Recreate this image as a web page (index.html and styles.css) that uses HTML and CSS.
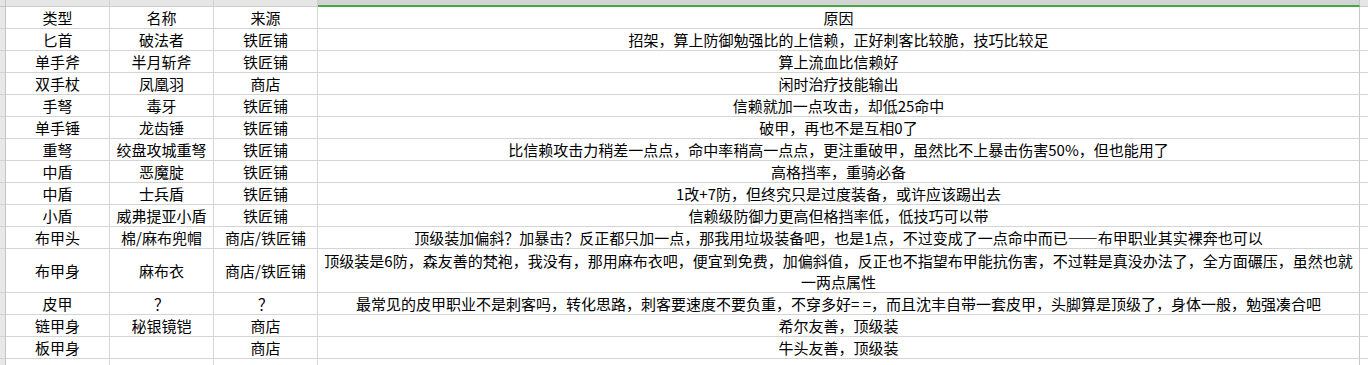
FILE: index.html
```html
<!DOCTYPE html>
<html lang="zh-CN">
<head>
<meta charset="utf-8">
<title>装备</title>
<link rel="stylesheet" href="styles.css">
</head>
<body>
<div class="sheet">
  <div class="corner"></div><div class="ch"></div><div class="ch"></div><div class="ch"></div><div class="ch sel"></div><div class="ch last"></div>

  <div class="rh"></div><div class="c">类型</div><div class="c">名称</div><div class="c">来源</div><div class="c d">原因</div><div class="c e"></div>
  <div class="rh"></div><div class="c">匕首</div><div class="c">破法者</div><div class="c">铁匠铺</div><div class="c d">招架，算上防御勉强比的上信赖，正好刺客比较脆，技巧比较足</div><div class="c e"></div>
  <div class="rh"></div><div class="c">单手斧</div><div class="c">半月斩斧</div><div class="c">铁匠铺</div><div class="c d">算上流血比信赖好</div><div class="c e"></div>
  <div class="rh"></div><div class="c">双手杖</div><div class="c">凤凰羽</div><div class="c">商店</div><div class="c d">闲时治疗技能输出</div><div class="c e"></div>
  <div class="rh"></div><div class="c">手弩</div><div class="c">毒牙</div><div class="c">铁匠铺</div><div class="c d">信赖就加一点攻击，却低25命中</div><div class="c e"></div>
  <div class="rh"></div><div class="c">单手锤</div><div class="c">龙齿锤</div><div class="c">铁匠铺</div><div class="c d">破甲，再也不是互相0了</div><div class="c e"></div>
  <div class="rh"></div><div class="c">重弩</div><div class="c">绞盘攻城重弩</div><div class="c">铁匠铺</div><div class="c d">比信赖攻击力稍差一点点，命中率稍高一点点，更注重破甲，虽然比不上暴击伤害50%，但也能用了</div><div class="c e"></div>
  <div class="rh"></div><div class="c">中盾</div><div class="c">恶魔腚</div><div class="c">铁匠铺</div><div class="c d">高格挡率，重骑必备</div><div class="c e"></div>
  <div class="rh"></div><div class="c">中盾</div><div class="c">士兵盾</div><div class="c">铁匠铺</div><div class="c d">1改+7防，但终究只是过度装备，或许应该踢出去</div><div class="c e"></div>
  <div class="rh"></div><div class="c">小盾</div><div class="c">威弗提亚小盾</div><div class="c">铁匠铺</div><div class="c d">信赖级防御力更高但格挡率低，低技巧可以带</div><div class="c e"></div>
  <div class="rh"></div><div class="c">布甲头</div><div class="c">棉/麻布兜帽</div><div class="c">商店/铁匠铺</div><div class="c d">顶级装加偏斜？加暴击？反正都只加一点，那我用垃圾装备吧，也是1点，不过变成了一点命中而已——布甲职业其实裸奔也可以</div><div class="c e"></div>
  <div class="rh"></div><div class="c">布甲身</div><div class="c">麻布衣</div><div class="c">商店/铁匠铺</div><div class="c d">顶级装是6防，森友善的梵袍，我没有，那用麻布衣吧，便宜到免费，加偏斜值，反正也不指望布甲能抗伤害，不过鞋是真没办法了，全方面碾压，虽然也就一两点属性</div><div class="c e"></div>
  <div class="rh"></div><div class="c">皮甲</div><div class="c">？</div><div class="c">？</div><div class="c d">最常见的皮甲职业不是刺客吗，转化思路，刺客要速度不要负重，不穿多好= =，而且沈丰自带一套皮甲，头脚算是顶级了，身体一般，勉强凑合吧</div><div class="c e"></div>
  <div class="rh"></div><div class="c">链甲身</div><div class="c">秘银镜铠</div><div class="c">商店</div><div class="c d">希尔友善，顶级装</div><div class="c e"></div>
  <div class="rh"></div><div class="c">板甲身</div><div class="c"></div><div class="c">商店</div><div class="c d">牛头友善，顶级装</div><div class="c e"></div>
  <div class="rh"></div><div class="c"></div><div class="c"></div><div class="c"></div><div class="c d"></div><div class="c e"></div>
</div>
</body>
</html>
```
FILE: styles.css
```css
html, body {
  margin: 0;
  padding: 0;
  background: #ffffff;
}
body {
  font-family: "Noto Sans CJK SC", "Noto Sans", sans-serif;
  font-size: 15px;
  color: #000000;
  overflow: hidden;
}
.sheet {
  display: grid;
  grid-template-columns: 6px 104px 104px 104px 1042px 1fr;
  grid-template-rows: 7px repeat(11, 22px) 44px repeat(3, 22px) 22px;
  width: 1368px;
}
.corner {
  background: #e4e4e4;
  border-right: 1px solid #c4c4c4;
  border-bottom: 1px solid #c4c4c4;
  box-sizing: border-box;
}
.ch {
  background: #e6e6e6;
  border-right: 1px solid #d0d0d0;
  border-bottom: 1px solid #cdcdcd;
  box-sizing: border-box;
}
.ch.sel {
  background: #d4d4d4;
  border-bottom: 2px solid #45a845;
  border-right-color: #c4c4c4;
}
.ch.last {
  border-right: none;
}
.rh {
  background: #e8e8e8;
  border-right: 1px solid #c4c4c4;
  border-bottom: 1px solid #d2d2d2;
  box-sizing: border-box;
}
.c {
  box-sizing: border-box;
  border-right: 1px solid #d4d4d4;
  border-bottom: 1px solid #d4d4d4;
  display: flex;
  align-items: center;
  justify-content: center;
  text-align: center;
  line-height: 21px;
  white-space: nowrap;
  overflow: hidden;
}
.c.d {
  padding: 0 3px;
  white-space: normal;
  border-right-color: #c8c8c8;
}
.c.e {
  border-right: none;
}
```
